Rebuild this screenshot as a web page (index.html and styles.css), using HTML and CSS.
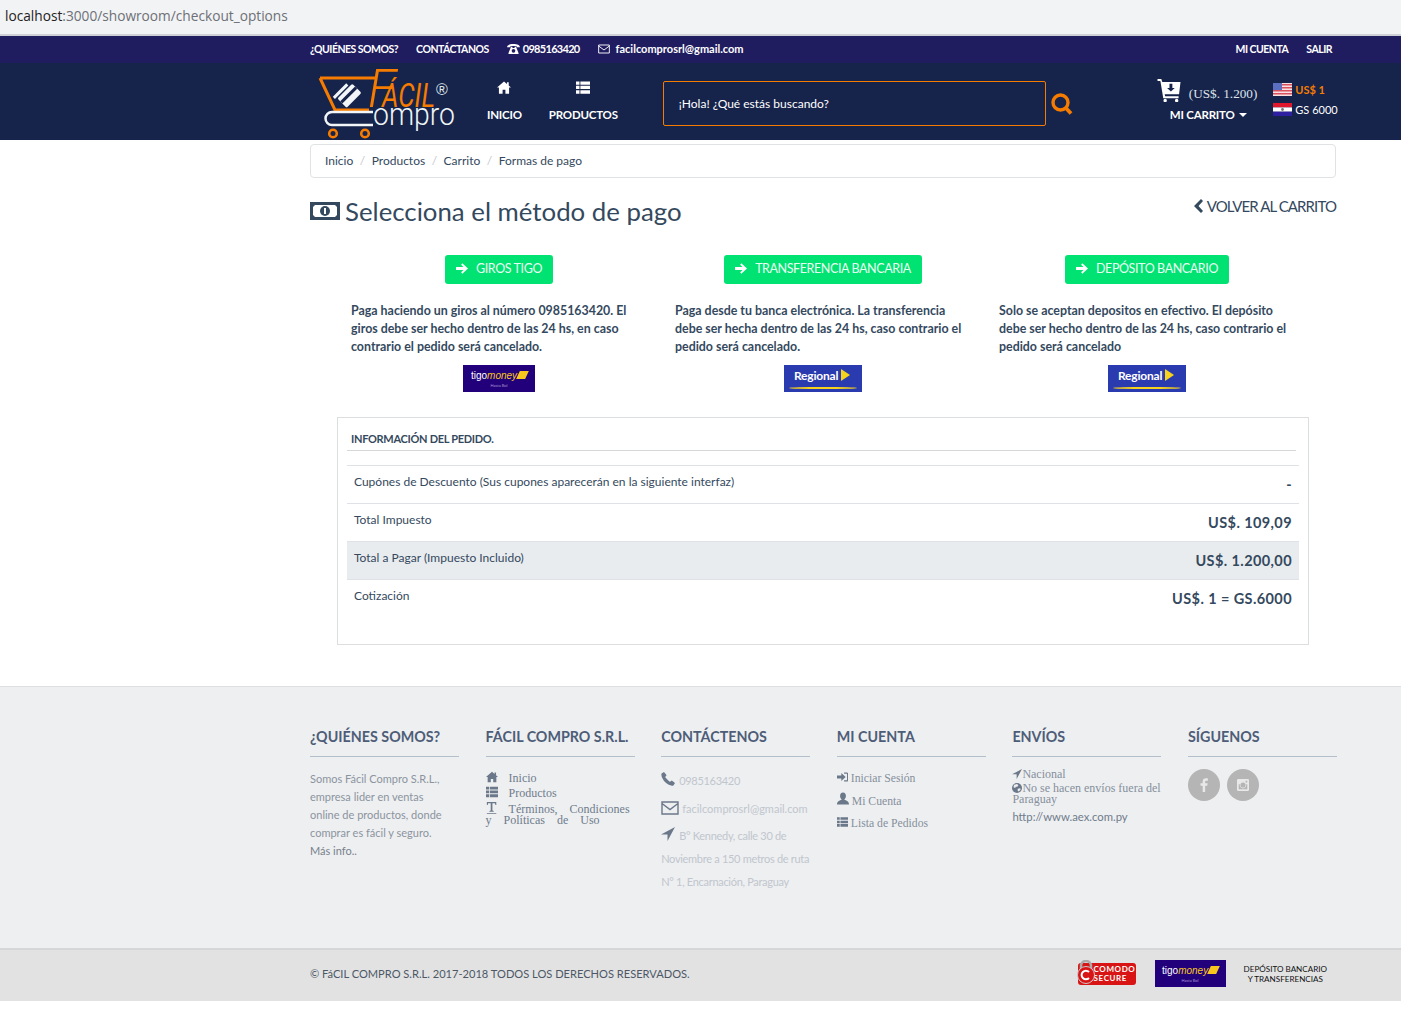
FILE: index.html
```html
<!DOCTYPE html>
<html lang="es">
<head>
  <meta charset="UTF-8" />
  <title>Formas de pago</title>
  <link rel="stylesheet" href="styles.css">
</head>
<body>
  <svg class="sprite" width="0" height="0">
    <symbol id="i-home" viewBox="0 0 16 14"><path d="M8 0 0 7h2.2v7h4.2V9.5h3.2V14h4.2V7H16l-2.6-2.3V1h-2v1.9z"/></symbol>
    <symbol id="i-list" viewBox="0 0 16 14"><path d="M0 0h4v3.8H0zM5 0h11v3.8H5zM0 5h4v3.8H0zM5 5h11v3.8H5zM0 10h4v4H0zM5 10h11v4H5z"/></symbol>
    <symbol id="i-arrow" viewBox="0 0 14 12"><path d="M7.4 0 6 1.6 8.8 4.3H0v3.4h8.8L6 10.4 7.4 12 14 6z"/></symbol>
    <symbol id="i-phone" viewBox="0 0 14 14"><path d="M3 0 .6 1.6C-.4 4 2 8 4 10s6 4.4 8.4 3.4L14 11l-3.2-2.6-1.8 1.4C8 9.400 4.600 6 4.200 5L5.600 3.200z"/></symbol>
    <symbol id="i-mail" viewBox="0 0 18 14"><path fill="none" stroke="currentColor" stroke-width="1.400" d="M1 1h16v12H1zM1 2.500l8 6 8-6"/></symbol>
    <symbol id="i-send" viewBox="0 0 14 14"><path d="M14 0 0 7.500h6.500V14z"/></symbol>
    <symbol id="i-user" viewBox="0 0 14 14"><path d="M7 0c2.200 0 3.400 1.700 3.400 4 0 1.600-.8 3.200-1.800 4 0 1.300 5.400 1.500 5.400 6H0c0-4.500 5.400-4.700 5.400-6-1-.8-1.800-2.400-1.800-4C3.600 1.700 4.800 0 7 0z"/></symbol>
    <symbol id="i-login" viewBox="0 0 14 12"><path d="M5.500 1v3H0v4h5.500v3L11 6z"/><path fill="none" stroke="currentColor" stroke-width="1.500" d="M9 1h3.500a1 1 0 0 1 1 1v8a1 1 0 0 1-1 1H9"/></symbol>
    <symbol id="i-text" viewBox="0 0 12 14"><path d="M0 0h11v3.500h-1L9.500 1.500H6.500v8.500l1.500.500v1H3v-1l1.500-.500V1.500h-3L1 3.500H0zM0 12.700h11v1H0z"/></symbol>
    <symbol id="i-globe" viewBox="0 0 14 14"><circle cx="7" cy="7" r="7"/><path fill="#eeeff1" d="M3 2.500 7 1.500l2 1.500-2 2.500-1.500-.500-1 2L2 6zM8 8l3.500-.500.500 2L9.500 12 8 11z"/></symbol>
    <symbol id="i-phone2" viewBox="0 0 18 14"><path d="M9 0C4 0 0 1.500 0 4.500h4.500V3.200C6 2.600 12 2.600 13.500 3.200v1.300H18C18 1.500 14 0 9 0zM5.500 4 2 12.500V14h14v-1.500L12.500 4h-2v1.500h-3V4zM9 7a2.600 2.600 0 1 1 0 5.200A2.600 2.600 0 0 1 9 7z"/></symbol>
  </svg>

  <div class="address-bar"><b>localhost</b><span>:3000/showroom/checkout_options</span></div>

  <div class="topbar">
    <div class="wrap topbar-in">
      <div class="top-links">
        <a>¿QUIÉNES SOMOS?</a>
        <a>CONTÁCTANOS</a>
        <a class="top-phone"><svg class="ic-phone"><use href="#i-phone2"/></svg> 0985163420</a>
        <a class="top-mail"><svg class="ic-mail"><use href="#i-mail"/></svg> facilcomprosrl@gmail.com</a>
      </div>
      <div class="top-links top-right">
        <a>MI CUENTA</a>
        <a>SALIR</a>
      </div>
    </div>
  </div>

  <header class="header">
    <div class="wrap header-in">
      <svg class="logo" viewBox="0 0 140 74">
        <path d="M2 12h56M2 12l15 32h34" fill="none" stroke="#f57c00" stroke-width="3"/>
        <path d="M55 46H14a6.500 6.500 0 0 0 0 13h41" fill="none" stroke="#f2f6f8" stroke-width="2.500"/>
        <g fill="none" stroke="#f57c00" stroke-width="2.600"><circle cx="15" cy="67.500" r="3.800"/><circle cx="47" cy="67.500" r="3.800"/></g>
        <g transform="rotate(-45 30 29)"><rect x="20" y="24" width="21" height="13" rx="1.500" fill="#f2f6f8"/><rect x="20" y="28" width="21" height="3" fill="#16234a"/><rect x="18" y="19.500" width="19" height="3" fill="#f2f6f8"/></g>
        <text class="logo-f" x="50" y="41" textLength="28" lengthAdjust="spacingAndGlyphs">F</text>
        <text class="logo-facil" x="64" y="41" textLength="53" lengthAdjust="spacingAndGlyphs">ÁCIL</text>
        <text class="logo-r" x="118" y="29">®</text>
        <text class="logo-ompro" x="55" y="59" textLength="82" lengthAdjust="spacingAndGlyphs">ompro</text>
      </svg>
      <nav class="main-nav">
        <a><svg class="nav-ic"><use href="#i-home"/></svg>INICIO</a>
        <a><svg class="nav-ic"><use href="#i-list"/></svg>PRODUCTOS</a>
      </nav>
      <div class="search">
        <div class="search-box">¡Hola! ¿Qué estás buscando?</div>
        <svg class="search-ic" viewBox="0 0 22 22"><circle cx="9.500" cy="9.500" r="7.500" fill="none" stroke="#f57c00" stroke-width="3.400"/><path d="M14 14l6 6.500" stroke="#f57c00" stroke-width="3.800"/></svg>
      </div>
      <div class="cart">
        <div class="cart-top">
          <svg class="cart-ic" viewBox="0 0 24 24"><path fill="#fff" d="M0 0h4l1 3h19l-1.500 13H7.500l.4 2H22v2H6L3 2H0z"/><circle fill="#fff" cx="8" cy="22.500" r="1.800"/><circle fill="#fff" cx="20" cy="22.500" r="1.800"/><path fill="#16234a" d="M12.500 5h3v4.500H18L14 13l-4-3.500h2.500z"/></svg>
          <span class="cart-total">(US$. 1.200)</span>
        </div>
        <div class="cart-label">MI CARRITO <i class="caret"></i></div>
      </div>
      <div class="rates">
        <div class="rate rate-usd">
          <svg class="flag" viewBox="0 0 19 13"><rect width="19" height="13" fill="#f8e0e0"/><path d="M0 1h19v1.500H0zM0 4h19v1.500H0zM0 7h19v1.500H0zM0 10h19v1.500H0z" fill="#d9505f"/><rect width="9" height="7" fill="#5a6fc0"/></svg>
          US$ 1
        </div>
        <div class="rate">
          <svg class="flag" viewBox="0 0 19 13"><rect width="19" height="4.400" fill="#e0182d"/><rect y="4.400" width="19" height="4.300" fill="#fff"/><rect y="8.700" width="19" height="4.300" fill="#2d1fa0"/><circle cx="9.500" cy="6.500" r="1.400" fill="#777"/></svg>
          GS 6000
        </div>
      </div>
    </div>
  </header>

  <main class="wrap">
    <ol class="breadcrumb">
      <li>Inicio</li>
      <li>Productos</li>
      <li>Carrito</li>
      <li>Formas de pago</li>
    </ol>

    <div class="title-row">
      <h1>
        <svg class="money-ic" viewBox="0 0 30 18"><path fill="#34495e" fill-rule="evenodd" d="M0 0h30v18H0zM5 3 3 5v8l2 2h20l2-2V5l-2-2z"/><circle cx="15" cy="9" r="5" fill="#34495e"/><path fill="#fff" d="M14 6h2v6h-2z"/></svg>
        Selecciona el método de pago
      </h1>
      <a class="back"><svg class="back-ic" viewBox="0 0 9 14"><path d="M7 0 9 2 4.500 7 9 12l-2 2L0 7z"/></svg>VOLVER AL CARRITO</a>
    </div>

    <section class="methods">
      <article class="method">
        <a class="btn-pay"><svg class="btn-ic"><use href="#i-arrow"/></svg>GIROS TIGO</a>
        <p>Paga haciendo un giros al número 0985163420. El giros debe ser hecho dentro de las 24 hs, en caso contrario el pedido será cancelado.</p>
        <div class="tigo"><div class="tigo-row"><span class="tigo-a">tigo</span><span class="tigo-b">money</span><i class="tigo-mark"></i></div><span class="tigo-sub">Hasta Bol</span></div>
      </article>
      <article class="method">
        <a class="btn-pay"><svg class="btn-ic"><use href="#i-arrow"/></svg>TRANSFERENCIA BANCARIA</a>
        <p>Paga desde tu banca electrónica. La transferencia debe ser hecha dentro de las 24 hs, caso contrario el pedido será cancelado.</p>
        <div class="regional">Regional<i class="regional-mark"></i></div>
      </article>
      <article class="method">
        <a class="btn-pay"><svg class="btn-ic"><use href="#i-arrow"/></svg>DEPÓSITO BANCARIO</a>
        <p>Solo se aceptan depositos en efectivo. El depósito debe ser hecho dentro de las 24 hs, caso contrario el pedido será cancelado</p>
        <div class="regional">Regional<i class="regional-mark"></i></div>
      </article>
    </section>

    <section class="order">
      <h2>INFORMACIÓN DEL PEDIDO.</h2>
      <div class="order-row order-first"><span>Cupónes de Descuento (Sus cupones aparecerán en la siguiente interfaz)</span><b>-</b></div>
      <div class="order-row"><span>Total Impuesto</span><b>US$. 109,09</b></div>
      <div class="order-row order-total"><span>Total a Pagar (Impuesto Incluido)</span><b>US$. 1.200,00</b></div>
      <div class="order-row"><span>Cotización</span><b>US$. 1 = GS.6000</b></div>
    </section>
  </main>

  <footer class="footer">
    <div class="wrap footer-cols">
      <div class="fcol">
        <h3>¿QUIÉNES SOMOS?</h3>
        <p class="about">Somos Fácil Compro S.R.L.,<br>empresa lider en ventas<br>online de productos, donde<br>comprar es fácil y seguro.<br><span class="more">Más info..</span></p>
      </div>
      <div class="fcol">
        <h3>FÁCIL COMPRO S.R.L.</h3>
        <div class="serif-list">
          <div><svg class="f-ic"><use href="#i-home"/></svg><span class="pad">Inicio</span></div>
          <div class="l-prod"><svg class="f-ic"><use href="#i-list"/></svg><span class="pad">Productos</span></div>
          <div class="l-terms"><svg class="f-ic"><use href="#i-text"/></svg><span class="pad">Términos,</span> Condiciones y Políticas de Uso</div>
        </div>
      </div>
      <div class="fcol">
        <h3>CONTÁCTENOS</h3>
        <div class="contact">
          <div><svg class="c-ic"><use href="#i-phone"/></svg>0985163420</div>
          <div class="c-mail"><svg class="c-ic-mail"><use href="#i-mail"/></svg>facilcomprosrl@gmail.com</div>
          <div class="c-addr"><svg class="c-ic"><use href="#i-send"/></svg>B° Kennedy, calle 30 de Noviembre a 150 metros de ruta N° 1, Encarnación, Paraguay</div>
        </div>
      </div>
      <div class="fcol">
        <h3>MI CUENTA</h3>
        <div class="account">
          <div><svg class="a-ic"><use href="#i-login"/></svg>Iniciar Sesión</div>
          <div><svg class="a-ic a-user"><use href="#i-user"/></svg>Mi Cuenta</div>
          <div><svg class="a-ic"><use href="#i-list"/></svg>Lista de Pedidos</div>
        </div>
      </div>
      <div class="fcol">
        <h3>ENVÍOS</h3>
        <div class="ship">
          <div><svg class="s-ic"><use href="#i-send"/></svg>Nacional</div>
          <div class="s-far"><svg class="s-ic"><use href="#i-globe"/></svg>No se hacen envíos fuera del Paraguay</div>
          <div class="s-url">http://www.aex.com.py</div>
        </div>
      </div>
      <div class="fcol">
        <h3>SÍGUENOS</h3>
        <div class="social">
          <a class="circle"><svg viewBox="0 0 10 18" class="s-fb"><path d="M6.500 18V10h2.700l.5-3.200H6.500V5c0-.9.300-1.500 1.600-1.500H10V.6C9.600.5 8.600.4 7.500.4 5 .4 3.300 1.900 3.300 4.600v2.200H.5V10h2.800v8z"/></svg></a>
          <a class="circle"><svg viewBox="0 0 14 14" class="s-ig"><path fill-rule="evenodd" d="M1.500 0h11A1.500 1.500 0 0 1 14 1.500v11a1.500 1.500 0 0 1-1.500 1.500h-11A1.500 1.500 0 0 1 0 12.500v-11A1.500 1.500 0 0 1 1.500 0zM10 2v2h2V2zM7 4a3 3 0 1 0 0 6 3 3 0 0 0 0-6zM2 6v6h10V6h-1.400a3.800 3.800 0 1 1-7.200 0z"/></svg></a>
        </div>
      </div>
    </div>
    <div class="footer-bottom">
      <div class="wrap bottom-in">
        <span>© FáCIL COMPRO S.R.L. 2017-2018 TODOS LOS DERECHOS RESERVADOS.</span>
        <div class="badges">
          <div class="comodo">
            <svg class="comodo-lock" viewBox="0 0 18 24"><path d="M4 10V6a5 5 0 0 1 10 0v4" fill="none" stroke="#aaa" stroke-width="2.500"/><circle cx="9" cy="15" r="8.500" fill="#d81414" stroke="#ccc"/><path d="M12 12a4.300 4.300 0 1 0 0 6" fill="none" stroke="#fff" stroke-width="2"/></svg>
            <div class="comodo-text">COMODO<br>SECURE</div>
          </div>
          <div class="tigo tigo-lg"><div class="tigo-row"><span class="tigo-a">tigo</span><span class="tigo-b">money</span><i class="tigo-mark"></i></div><span class="tigo-sub">Hasta Bol</span></div>
          <div class="dep">DEPÓSITO BANCARIO<br>Y TRANSFERENCIAS</div>
        </div>
      </div>
    </div>
  </footer>
</body>
</html>
```
FILE: styles.css
```css
* {
  box-sizing: border-box;
}
body {
  margin: 0;
  background: #fff;
  color: #34495e;
  font-family: "Lato", "Noto Sans", sans-serif;
  font-size: 13px;
}
.sprite {
  position: absolute;
}
.wrap {
  width: 1026px;
  margin-left: 310px;
}
svg {
  fill: currentColor;
  display: inline-block;
}

/* barra del navegador */
.address-bar {
  height: 36px;
  background: #f2f3f5;
  border-bottom: 2px solid #cfd1d6;
  padding: 6px 0 0 5px;
  font-family: "Open Sans", sans-serif;
  font-size: 13.700px;
  color: #6d7075;
  white-space: nowrap;
}
.address-bar b {
  font-weight: 400;
  color: #222;
}

/* barra superior */
.topbar {
  height: 27px;
  background: #1f1c5f;
  color: #fff;
}
.topbar-in {
  display: flex;
  justify-content: space-between;
  height: 27px;
  align-items: center;
  padding: 0 4px 2px 0;
}
.top-links {
  display: flex;
  gap: 18px;
  font-size: 10.500px;
  font-weight: 700;
  letter-spacing: -0.5px;
}
.top-links a {
  display: flex;
  align-items: center;
  gap: 3px;
}
.top-phone {
  letter-spacing: -0.7px;
  font-size: 11px;
}
.top-links .top-mail {
  gap: 6px;
  font-size: 11px;
  letter-spacing: 0;
}
.ic-phone {
  width: 13px;
  height: 10px;
}
.ic-mail {
  width: 12px;
  height: 10px;
}

/* cabecera */
.header {
  height: 77px;
  background: #16234a;
  color: #fff;
}
.header-in {
  display: flex;
  height: 77px;
}
.logo {
  width: 140px;
  height: 74px;
  margin: 3px 0 0 8px;
  flex: none;
}
.logo-f {
  fill: #f57c00;
  font-family: "Roboto", sans-serif;
  font-weight: 300;
  font-style: italic;
  font-size: 54px;
}
.logo-facil {
  fill: #f57c00;
  font-family: "Roboto", sans-serif;
  font-size: 33px;
  font-style: italic;
}
.logo-r {
  fill: #dfe6ea;
  font-size: 16px;
  font-family: "Liberation Sans", sans-serif;
}
.logo-ompro {
  fill: #eef5f7;
  font-family: "Roboto", sans-serif;
  font-weight: 300;
  font-size: 32px;
}
.main-nav {
  display: flex;
  gap: 27px;
  margin-left: 29px;
  font-size: 11.500px;
  font-weight: 700;
  letter-spacing: -0.2px;
}
.main-nav a {
  display: flex;
  flex-direction: column;
  align-items: center;
  padding-top: 18px;
}
.nav-ic {
  width: 14px;
  height: 13px;
  margin-bottom: 14px;
}
.search {
  display: flex;
  align-items: center;
  margin: 18px 0 0 45px;
  height: 45px;
}
.search-box {
  width: 383px;
  height: 45px;
  border: 1px solid #f57c00;
  border-radius: 2px;
  padding-left: 15px;
  line-height: 44px;
  font-size: 12px;
}
.search-ic {
  width: 22px;
  height: 22px;
  margin-left: 5px;
}
.cart {
  margin: 16px 0 0 84px;
  width: 103px;
}
.cart-top {
  display: flex;
  align-items: flex-end;
  gap: 8px;
}
.cart-ic {
  width: 24px;
  height: 23px;
  flex: none;
}
.cart-total {
  font-family: "Liberation Serif", serif;
  font-size: 13.200px;
  color: #dfe3ea;
  white-space: nowrap;
}
.cart-label {
  margin: 6px 0 0 13px;
  font-size: 11.500px;
  font-weight: 700;
  letter-spacing: -0.2px;
  white-space: nowrap;
}
.caret {
  display: inline-block;
  border: 4px solid transparent;
  border-top-color: #fff;
  border-bottom: 0;
  margin: 0 0 2px 2px;
}
.rates {
  margin: 16px 0 0 16px;
}
.rate {
  display: flex;
  align-items: center;
  gap: 3px;
  height: 20px;
  font-size: 11px;
  white-space: nowrap;
}
.rate-usd {
  color: #f57c00;
  font-weight: 700;
}
.flag {
  width: 19px;
  height: 13px;
}

/* breadcrumb */
.breadcrumb {
  list-style: none;
  display: flex;
  height: 34px;
  margin: 4px 0 0;
  padding: 0 14px 2px;
  align-items: center;
  border: 1px solid #e0e2e4;
  border-radius: 4px;
  font-size: 12px;
}
.breadcrumb li + li::before {
  content: "/";
  color: #c4c8cc;
  padding: 0 6.500px;
}

/* titulo */
.title-row {
  display: flex;
  justify-content: space-between;
  height: 77px;
  padding-top: 16px;
}
h1 {
  display: flex;
  align-items: center;
  gap: 5px;
  margin: 0;
  height: 34px;
  font-size: 25.800px;
  font-weight: 400;
  color: #34495e;
}
.money-ic {
  width: 30px;
  height: 18px;
}
.back {
  font-size: 15px;
  letter-spacing: -0.9px;
  display: flex;
  align-items: center;
  gap: 4px;
  height: 24px;
}
.back-ic {
  width: 9px;
  height: 14px;
}

/* metodos de pago */
.methods {
  display: grid;
  grid-template-columns: repeat(3, 324px);
  margin-left: 27px;
}
.method {
  display: flex;
  flex-direction: column;
  align-items: center;
}
.method p {
  margin: 18px 0 9px;
  width: 100%;
  padding: 0 14px;
  font-size: 12.400px;
  font-weight: 700;
  line-height: 18px;
}
.btn-pay {
  display: flex;
  align-items: center;
  gap: 8px;
  height: 29px;
  padding: 0 11px 2px;
  border-radius: 3px;
  background: #00e272;
  color: #eafff3;
  font-size: 12.500px;
  letter-spacing: -0.4px;
}
.btn-ic {
  width: 12px;
  height: 11px;
  fill: #fff;
}
.tigo {
  width: 72px;
  height: 27px;
  background: #22007c;
  color: #fff;
  display: flex;
  flex-direction: column;
  align-items: center;
  padding-top: 3px;
}
.tigo-row {
  display: flex;
  align-items: center;
  height: 14px;
  font-family: "Liberation Sans", sans-serif;
  font-size: 10px;
}
.tigo-b {
  color: #f7c71d;
  font-style: italic;
}
.tigo-mark {
  width: 9px;
  height: 8px;
  margin-left: 1px;
  background: #f7c71d;
  transform: skewX(-25deg);
}
.tigo-sub {
  font-size: 4px;
  color: #a99ad0;
  margin-top: 1px;
}
.regional {
  position: relative;
  width: 78px;
  height: 27px;
  padding: 3px 0 0 10px;
  background: #2a3bb0;
  color: #fff;
  font-size: 12px;
  font-weight: 700;
  letter-spacing: -0.2px;
}
.regional::after {
  content: "";
  position: absolute;
  left: 5px;
  right: 5px;
  bottom: 3px;
  height: 2px;
  border-radius: 50%;
  background: #f7d21d;
}
.regional-mark {
  position: absolute;
  left: 57px;
  top: 4px;
  border-left: 9px solid #f7d21d;
  border-top: 6.500px solid transparent;
  border-bottom: 6.500px solid transparent;
}

/* pedido */
.order {
  width: 972px;
  height: 228px;
  margin: 25px 0 0 27px;
  padding: 0 9px;
  border: 1px solid #dcdee0;
}
.order h2 {
  margin: 0 3px 14px 0;
  height: 33px;
  padding: 14px 0 0 4px;
  font-size: 11px;
  letter-spacing: -0.3px;
  font-weight: 700;
  border-bottom: 1px solid #d5d8da;
}
.order-row {
  display: flex;
  justify-content: space-between;
  height: 38px;
  padding: 8px 7px 0;
  border-top: 1px solid #dee2e6;
  font-size: 12px;
}
.order-row b {
  font-size: 14.500px;
  padding-top: 2px;
  letter-spacing: 0.4px;
}
.order-total {
  background: #e9ecef;
}

/* pie */
.footer {
  margin-top: 41px;
  background: #eeeff1;
  border-top: 1px solid #dddfe1;
  color: #6f7c8c;
}
.footer-cols {
  display: grid;
  grid-template-columns: repeat(6, 149px);
  column-gap: 26.600px;
  height: 261px;
  padding-top: 41px;
}
.fcol h3 {
  margin: 0 0 12px;
  height: 29px;
  border-bottom: 1px solid #b3bfca;
  font-size: 14.300px;
  font-weight: 700;
  color: #4d5d78;
  white-space: nowrap;
}
.about {
  margin: 0;
  padding-top: 1px;
  font-size: 11px;
  line-height: 18px;
  color: #8b949e;
}
.more {
  color: #77818c;
}
.serif-list {
  font-family: "Liberation Serif", serif;
  font-size: 12px;
  line-height: 11px;
  word-spacing: 9px;
  padding-top: 2px;
}
.pad {
  margin-left: 11px;
}
.f-ic {
  width: 12px;
  height: 12px;
  color: #6b788a;
  vertical-align: -1px;
}
.l-prod {
  margin-top: 2px;
}
.l-terms {
  margin-top: 3px;
}
.contact {
  font-size: 11px;
  line-height: 23px;
  color: #c0c6cd;
  margin-top: 5px;
  letter-spacing: -0.3px;
}
.c-ic {
  width: 14px;
  height: 14px;
  color: #6b788a;
  margin-right: 4px;
  vertical-align: -1px;
}
.c-ic-mail {
  width: 18px;
  height: 14px;
  color: #6b788a;
  margin-right: 3px;
  vertical-align: -2px;
}
.c-mail {
  margin-top: 5px;
  letter-spacing: 0;
}
.c-addr {
  margin-top: 4px;
}
.account {
  font-family: "Liberation Serif", serif;
  font-size: 11.700px;
  color: #85909c;
  margin-top: 4px;
}
.account div {
  height: 22.500px;
  line-height: 20px;
}
.a-ic {
  width: 11px;
  height: 10px;
  color: #6b788a;
  margin-right: 3px;
}
.a-user {
  width: 12px;
  height: 13px;
}
.ship {
  font-family: "Liberation Serif", serif;
  font-size: 12px;
  line-height: 11px;
  color: #85909c;
  margin-top: 10px;
}
.s-ic {
  width: 10px;
  height: 10px;
  color: #6b788a;
  vertical-align: -1px;
}
.s-far {
  margin-top: 3px;
}
.s-url {
  margin-top: 6px;
  font-family: "Lato", sans-serif;
  font-size: 11.300px;
  color: #6f7c8c;
}
.social {
  display: flex;
  gap: 7px;
  margin-top: 1px;
}
.circle {
  display: flex;
  align-items: center;
  justify-content: center;
  width: 32px;
  height: 32px;
  border-radius: 50%;
  background: #b5b5b5;
  color: #e8e8e8;
}
.s-fb {
  width: 8px;
  height: 14px;
}
.s-ig {
  width: 12px;
  height: 12px;
}
.footer-bottom {
  height: 53px;
  background: #e2e2e3;
  border-top: 2px solid #d5d6d8;
}
.bottom-in {
  display: flex;
  justify-content: space-between;
  align-items: center;
  height: 47px;
  font-size: 11.100px;
  color: #4c5866;
}
.badges {
  display: flex;
  align-items: center;
  color: #111;
}
.comodo {
  position: relative;
  width: 58px;
  height: 22px;
  margin-right: 19px;
  background: #d81414;
  border-radius: 3px;
  padding-left: 16px;
  color: #fff;
}
.comodo-lock {
  position: absolute;
  left: -1px;
  top: -3px;
  width: 18px;
  height: 24px;
}
.comodo-text {
  font-size: 8px;
  font-weight: 700;
  line-height: 9px;
  letter-spacing: 0.6px;
  padding-top: 2px;
}
.tigo-lg {
  height: 27px;
  width: 71px;
  margin-right: 18px;
}
.dep {
  font-size: 8.100px;
  line-height: 10px;
  text-align: center;
  margin-right: 9px;
  color: #111;
}
```
